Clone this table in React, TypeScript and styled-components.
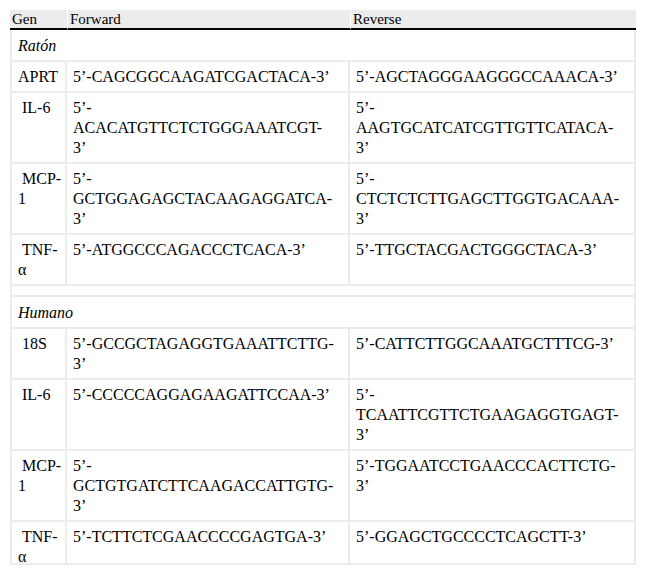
import React from "react";
import styled, { createGlobalStyle } from "styled-components";

const GlobalStyle = createGlobalStyle`
  body {
    margin: 0;
    background: #fff;
    font-family: "Liberation Serif", "Times New Roman", serif;
    color: #000;
  }
`

const Page = styled.div`
  padding: 10px;
`

const Table = styled.table`
  width: 626px;
  table-layout: fixed;
  border-collapse: separate;
  border-spacing: 0;
  font-size: 16px;
  line-height: 20px;
`

const HeadCell = styled.th<{ $width: number }>`
  box-sizing: border-box;
  width: ${p => p.$width}px;
  height: 20px;
  padding: 0 2px;
  background: #ececec;
  border-bottom: 2px solid #000;
  font-weight: 400;
  font-size: 15px;
  line-height: 18px;
  text-align: left;
  & + & {
    border-left: 1px solid #fff;
  }
`

const Cell = styled.td<{ $short?: boolean }>`
  vertical-align: top;
  padding: 5px 10px ${p => p.$short ? '0' : '4px'} 6px;
  border-bottom: 2px solid #ececec;
  border-right: 2px solid #ececec;
  &:first-child {
    border-left: 2px solid #ececec;
    padding-right: 4px;
  }
  &:nth-child(2) {
    padding-right: 14px;
  }
`

// the last row of the source table is drawn a little short
const CellBody = styled.div<{ $short?: boolean }>`
  ${p => p.$short && `height: 36px;`}
`

const GroupCell = styled.td`
  padding: 6px 6px 4px;
  font-style: italic;
  border-bottom: 2px solid #ececec;
  border-left: 2px solid #ececec;
  border-right: 2px solid #ececec;
`

const SpacerCell = styled.td`
  height: 9px;
  padding: 0;
  border-bottom: 2px solid #ececec;
  border-left: 2px solid #ececec;
  border-right: 2px solid #ececec;
`

type Primer = { gen: string, forward: string, reverse: string }

const groups: { name: string, rows: Primer[] }[] = [
    {
        name: "Ratón",
        rows: [
            {gen: "APRT", forward: "5’-CAGCGGCAAGATCGACTACA-3’", reverse: "5’-AGCTAGGGAAGGGCCAAACA-3’"},
            {gen: "\u00a0IL-6", forward: "5’-ACACATGTTCTCTGGGAAATCGT-3’", reverse: "5’-AAGTGCATCATCGTTGTTCATACA-3’"},
            {gen: "\u00a0MCP-1", forward: "5’-GCTGGAGAGCTACAAGAGGATCA-3’", reverse: "5’-CTCTCTCTTGAGCTTGGTGACAAA-3’"},
            {gen: "\u00a0TNF-α", forward: "5’-ATGGCCCAGACCCTCACA-3’", reverse: "5’-TTGCTACGACTGGGCTACA-3’"},
        ]
    },
    {
        name: "Humano",
        rows: [
            {gen: "\u00a018S", forward: "5’-GCCGCTAGAGGTGAAATTCTTG-3’", reverse: "5’-CATTCTTGGCAAATGCTTTCG-3’"},
            {gen: "\u00a0IL-6", forward: "5’-CCCCCAGGAGAAGATTCCAA-3’", reverse: "5’-TCAATTCGTTCTGAAGAGGTGAGT-3’"},
            {gen: "\u00a0MCP-1", forward: "5’-GCTGTGATCTTCAAGACCATTGTG-3’", reverse: "5’-TGGAATCCTGAACCCACTTCTG-3’"},
            {gen: "\u00a0TNF-α", forward: "5’-TCTTCTCGAACCCCGAGTGA-3’", reverse: "5’-GGAGCTGCCCCTCAGCTT-3’"},
        ]
    }
]

export default function App() {
    return <Page>
        <GlobalStyle/>
        <Table>
            <thead>
            <tr>
                <HeadCell $width={57}>Gen</HeadCell>
                <HeadCell $width={283}>Forward</HeadCell>
                <HeadCell $width={286}>Reverse</HeadCell>
            </tr>
            </thead>
            <tbody>
            {groups.map((group, i) => <React.Fragment key={group.name}>
                {i > 0 && <tr><SpacerCell colSpan={3}/></tr>}
                <tr><GroupCell colSpan={3}>{group.name}</GroupCell></tr>
                {group.rows.map((row, j) => {
                    const short = i === groups.length - 1 && j === group.rows.length - 1
                    return <tr key={group.name + row.gen}>
                        <Cell $short={short}><CellBody $short={short}>{row.gen}</CellBody></Cell>
                        <Cell $short={short}><CellBody $short={short}>{row.forward}</CellBody></Cell>
                        <Cell $short={short}><CellBody $short={short}>{row.reverse}</CellBody></Cell>
                    </tr>
                })}
            </React.Fragment>)}
            </tbody>
        </Table>
    </Page>
}
